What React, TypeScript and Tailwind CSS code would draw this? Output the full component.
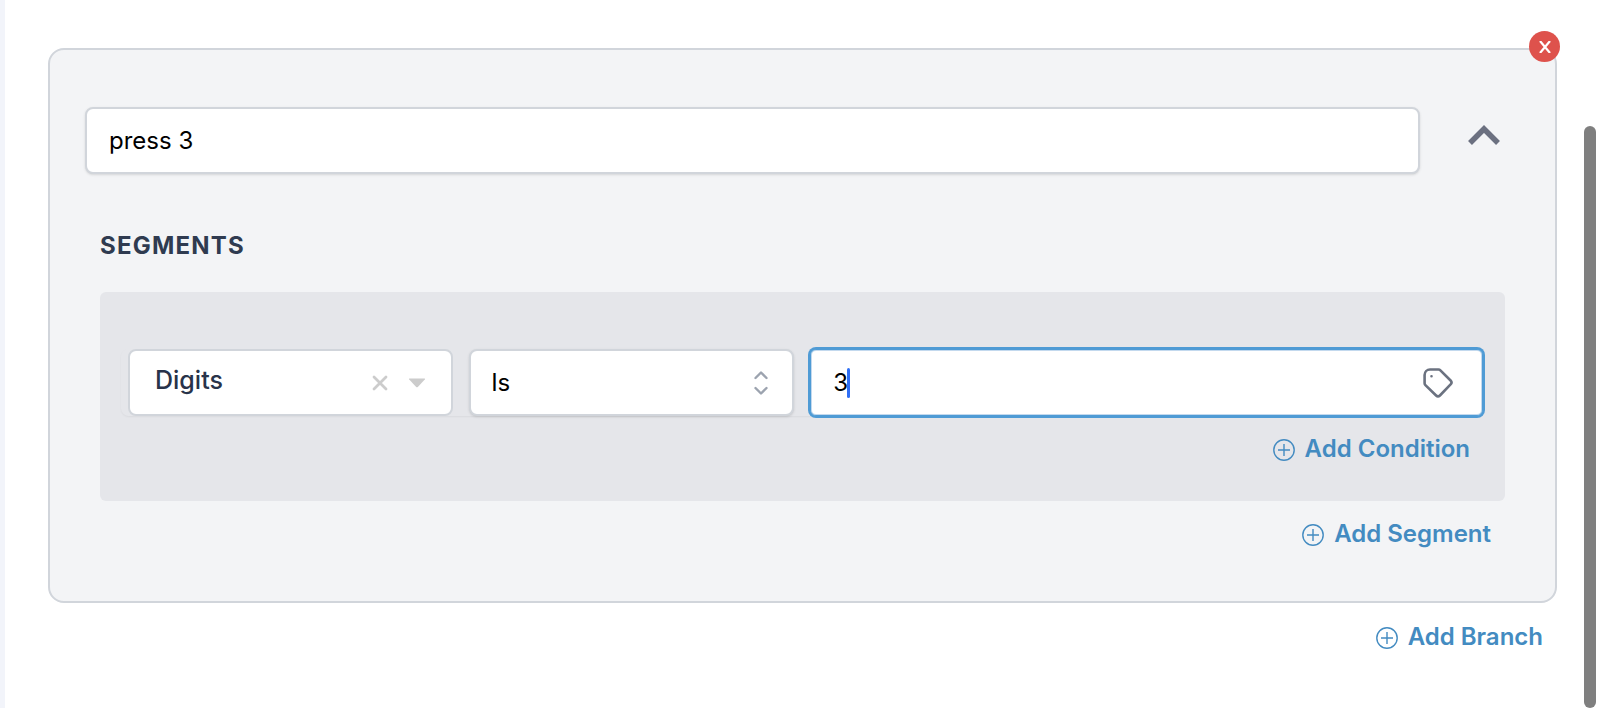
import { type FC, type ReactNode, useState } from "react";

const PlusCircle: FC = () => {
  return (
    <svg viewBox="0 0 22 22" className="mt-0.5 size-[22px]" fill="none" stroke="currentColor" aria-hidden="true">
      <circle cx="11" cy="11" r="10.2" strokeWidth="1.4" />
      <path d="M11 5v12M5 11h12" strokeWidth="1.4" />
    </svg>
  );
};

const AddButton: FC<{ children: ReactNode }> = (props) => {
  return (
    <button type="button" className="flex items-center gap-2.5 text-[24px] leading-8 font-semibold text-[#438bc1]">
      <PlusCircle />
      {props.children}
    </button>
  );
};

export default function App() {
  const [name, setName] = useState("press 3");
  const [field, setField] = useState("Digits");
  const [value, setValue] = useState("3");

  return (
    <div className="flex min-h-screen border-l-[5px] border-[#f2f4fa] bg-white font-['Inter','Liberation_Sans',sans-serif] text-[24px] text-black">
      <main className="min-w-0 flex-1 pt-12 pr-[27px] pl-[43px]">
        <section className="relative rounded-2xl border-2 border-[#d1d5db] bg-[#f3f4f6] pt-[57px] pr-[50px] pb-[51px] pl-[35px]">
          <button
            type="button"
            aria-label="Remove branch"
            className="absolute -top-[19px] -right-[5px] flex size-[31px] items-center justify-center rounded-full bg-[#de524c] text-white"
          >
            <svg viewBox="0 0 12 12" className="size-3" fill="none" stroke="currentColor" strokeWidth="2.2" aria-hidden="true">
              <path d="M1 0l10 12M11 0L1 12" />
            </svg>
          </button>

          <div className="flex items-center">
            <input
              aria-label="Branch name"
              value={name}
              onChange={(e) => setName(e.target.value)}
              className="h-[67px] min-w-0 flex-1 rounded-lg border-2 border-[#d1d5db] bg-white px-[22px] shadow-sm outline-none"
            />
            <button type="button" aria-label="Collapse branch" className="mr-[5px] ml-12 pb-3 text-[#6b7080]">
              <svg viewBox="0 0 32 20" className="h-5 w-8" fill="none" stroke="currentColor" strokeWidth="5.5" aria-hidden="true">
                <path d="M2 18L16 4l14 14" />
              </svg>
            </button>
          </div>

          <h2 className="mt-14 ml-[15px] leading-8 font-bold tracking-wider text-[#2f3b50]">SEGMENTS</h2>

          <div className="mt-[30px] ml-[15px] rounded-md bg-[#e5e6ea] pt-[57px] pr-[22px] pb-9 pl-[21px]">
            <div className="grid grid-cols-[29fr_29fr_60fr] gap-4 rounded-lg pl-[7px] shadow-xs">
              <div className="flex h-[67px] min-w-0 items-center rounded-lg border-2 border-[#d1d5db] bg-white px-[25px]">
                <select
                  aria-label="Field"
                  value={field}
                  onChange={(e) => setField(e.target.value)}
                  className="min-w-0 flex-1 appearance-none bg-white pb-1 text-[25px] font-medium text-[#28334a] outline-none"
                >
                  <option>Digits</option>
                </select>
                <button type="button" aria-label="Clear field" className="text-[#cccccc]">
                  <svg viewBox="0 0 16 16" className="size-4" fill="none" stroke="currentColor" strokeWidth="2.8" strokeLinecap="round" aria-hidden="true">
                    <path d="M2 2l12 12M14 2L2 14" />
                  </svg>
                </button>
                <svg viewBox="0 0 18 10" className="ml-5 h-2.5 w-[18px] fill-[#cccccc]" aria-hidden="true">
                  <path d="M1.500 .5h15q1 .2.3 1L9.800 9q-.8.7-1.600 0L1.200 1.500Q.5.700 1.500.5z" />
                </svg>
              </div>

              <div className="flex h-[67px] min-w-0 items-center rounded-lg border-2 border-[#d1d5db] bg-white pr-6 pl-5 shadow-sm">
                <select aria-label="Operator" className="min-w-0 flex-1 appearance-none bg-white outline-none">
                  <option>Is</option>
                </select>
                <svg viewBox="0 0 14 26" className="h-[26px] w-3.5" fill="none" stroke="#9ca3af" strokeWidth="2.4" strokeLinecap="round" strokeLinejoin="round" aria-hidden="true">
                  <path d="M1.500 8L7 2.500 12.500 8M1.500 18L7 23.500 12.500 18" />
                </svg>
              </div>

              <div className="relative flex h-[67px] min-w-0 items-center rounded-md border border-[#4f9bd5] bg-white pr-[29px] pl-[22px] ring-2 ring-[#4f9bd5] inset-ring-1 inset-ring-[#c3d9ee]">
                <input
                  aria-label="Value"
                  value={value}
                  onChange={(e) => setValue(e.target.value)}
                  className="min-w-0 flex-1 bg-white outline-none"
                />
                <span className="absolute left-9 h-[30px] w-[3px] rounded-full bg-[#2f6ff6]" />
                <button type="button" aria-label="Insert variable" className="text-[#6b7280]">
                  <svg viewBox="0 0 30 30" className="size-[30px]" fill="none" stroke="currentColor" strokeWidth="2.6" strokeLinecap="round" strokeLinejoin="round" aria-hidden="true">
                    <path d="M8.500 8.300h.01M7 1.500h8.500c.7 0 1.400.3 1.900.8l10.200 10.200a2.700 2.700 0 0 1 0 3.800L16.900 27.500a2.700 2.700 0 0 1-3.800 0L2.400 17.100a2.700 2.700 0 0 1-.8-1.900V7A5.500 5.500 0 0 1 7 1.500z" />
                  </svg>
                </button>
              </div>
            </div>

            <div className="mt-[17px] flex justify-end pr-[13px]">
              <AddButton>Add Condition</AddButton>
            </div>
          </div>

          <div className="mt-[17px] flex justify-end pr-3.5">
            <AddButton>Add Segment</AddButton>
          </div>
        </section>

        <div className="mt-[18px] flex justify-end pr-3.5">
          <AddButton>Add Branch</AddButton>
        </div>
      </main>

      <div className="flex w-4 flex-col pt-[126px] pr-1">
        <div className="flex-1 rounded-full bg-[#7f7f7f]" />
      </div>
    </div>
  );
}
